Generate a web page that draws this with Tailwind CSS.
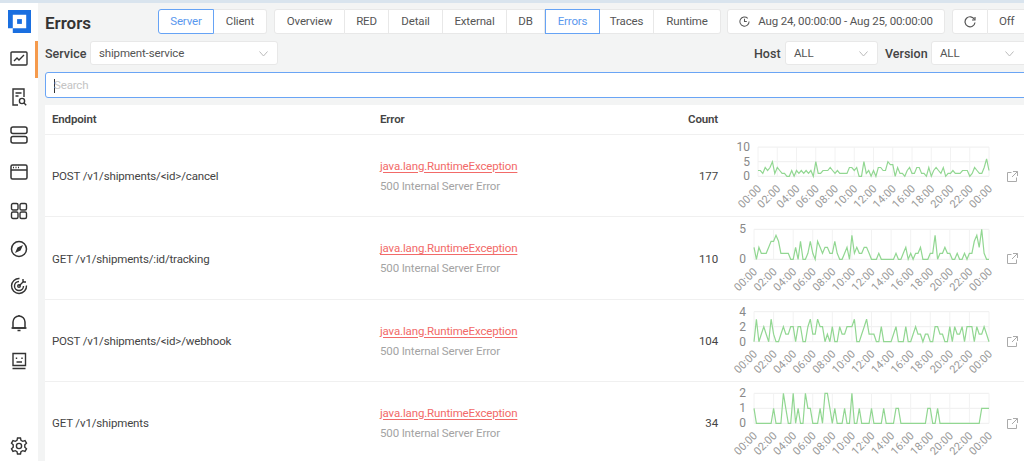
<!DOCTYPE html>
<html lang="en">
<head>
    <meta charset="UTF-8" />
    <title>Errors</title>
    <script src="https://cdn.jsdelivr.net/npm/@tailwindcss/browser@4"></script>
</head>
<body class="h-[461px] overflow-hidden bg-[#f3f4f4] font-['Roboto',sans-serif] text-[#333]">
    <div class="h-[3px] bg-[#d9e4ee]"></div>
    <div class="flex h-[458px]">
        <!-- sidebar -->
        <aside class="relative flex w-[38px] shrink-0 flex-col items-center bg-white text-[#333]">
            <svg class="mt-[7px] h-[23px] w-[23px]" viewBox="0 0 24 24">
                <path fill="#1a6fe0" d="M0 0h24v24H5v-5H19V5H5v14H0z"/>
                <rect fill="#1a6fe0" x="9.500" y="9.500" width="5" height="5"/>
            </svg>
            <div class="absolute right-0 top-[38px] h-[37px] w-[3px] bg-[#f59a4c]"></div>
            <svg class="mt-[17px] h-[18px] w-[18px]" viewBox="0 0 18 18" fill="none" stroke="currentColor" stroke-width="1.4"><rect x="1" y="2" width="16" height="13" rx="1"/><path d="M4 11l3-3 2 2 5-5"/></svg>
            <svg class="mt-[20px] h-[18px] w-[18px]" viewBox="0 0 18 18" fill="none" stroke="currentColor" stroke-width="1.4"><path d="M8 17H3V1h11v8"/><path d="M5.500 5h6M5.500 8h3"/><circle cx="12" cy="13" r="2.600"/><path d="M14 15l2.200 2.200"/></svg>
            <svg class="mt-[20px] h-[18px] w-[18px]" viewBox="0 0 18 18" fill="none" stroke="currentColor" stroke-width="1.5"><rect x="1" y="1" width="16" height="6.500" rx="2"/><rect x="1" y="10.500" width="16" height="6.500" rx="2"/></svg>
            <svg class="mt-[19px] h-[18px] w-[18px]" viewBox="0 0 18 18" fill="none" stroke="currentColor" stroke-width="1.5"><rect x="1" y="2" width="16" height="14" rx="1.500"/><path d="M1 7h16M3 4.600h1M5.500 4.600h1M8 4.600h1"/></svg>
            <svg class="mt-[21px] h-[18px] w-[18px]" viewBox="0 0 18 18" fill="none" stroke="currentColor" stroke-width="1.4"><rect x="1.500" y="1.500" width="6.500" height="6.500" rx="1.500"/><rect x="10" y="1.500" width="6.500" height="6.500" rx="1.500"/><rect x="1.500" y="10" width="6.500" height="6.500" rx="1.500"/><rect x="10" y="10" width="6.500" height="6.500" rx="1.500"/></svg>
            <svg class="mt-[20px] h-[18px] w-[18px]" viewBox="0 0 18 18" fill="none" stroke="currentColor" stroke-width="1.5"><circle cx="9" cy="9" r="7.500"/><path fill="currentColor" stroke="none" d="M13 5l-2.500 5.500L5 13l2.500-5.500z"/></svg>
            <svg class="mt-[19px] h-[18px] w-[18px]" viewBox="0 0 18 18" fill="none" stroke="currentColor" stroke-width="1.4"><path d="M16.500 8.500a7.500 7.500 0 1 1-7-7"/><path d="M13.500 9a4.500 4.500 0 1 1-4.500-4.500"/><circle cx="9" cy="9" r="1.300"/><path d="M9 9l5-5M13 2v3h3"/></svg>
            <svg class="mt-[19px] h-[18px] w-[18px]" viewBox="0 0 18 18" fill="none" stroke="currentColor" stroke-width="1.5"><path d="M3 14V8a6 6 0 0 1 12 0v6z"/><path d="M1.500 14h15M7.500 16.500h3M9 1v1"/></svg>
            <svg class="mt-[20px] h-[18px] w-[18px]" viewBox="0 0 18 18" fill="none" stroke="currentColor" stroke-width="1.4"><path d="M3 1.500h12.500v12H3zM2.500 16.500h13"/><path d="M6.500 5.500v1.500M12 5.500v1.500M6.500 10h5.500"/></svg>
            <svg class="mt-auto mb-[6px] h-[18px] w-[18px]" viewBox="0 0 18 18" fill="none" stroke="currentColor" stroke-width="1.4"><circle cx="9" cy="9" r="2.600"/><path d="M7.500 1h3l.5 2.300 1.700 1 2.300-.7 1.500 2.600-1.700 1.600v2.400l1.700 1.600-1.500 2.600-2.300-.7-1.700 1-.5 2.300h-3l-.5-2.300-1.700-1-2.300.7-1.500-2.600 1.700-1.600V7.800L1.500 6.200 3 3.600l2.300.7 1.700-1z"/></svg>
        </aside>

        <main class="min-w-0 flex-1 pl-[7px] text-[11.5px] tracking-[-0.15px]">
            <!-- top bar -->
            <div class="flex h-[38px] items-start whitespace-nowrap pt-[6px] text-[#555] *:shrink-0">
                <h1 class="w-[113px] text-[17px] font-semibold leading-[28px] tracking-normal text-[#333]">Errors</h1>
                <div class="flex h-[25px] items-center justify-center w-[56px] rounded-l-[3px] border border-[#66a3f5] bg-white text-[#5a98ee]">Server</div>
                <div class="flex h-[25px] items-center justify-center w-[53px] rounded-r-[3px] border border-l-0 border-[#e8e8e8] bg-white">Client</div>
                <div class="ml-[7px] flex h-[25px] items-center justify-center w-[71px] rounded-l-[3px] border border-[#e8e8e8] bg-white">Overview</div>
                <div class="flex h-[25px] items-center justify-center w-[44px] border border-l-0 border-[#e8e8e8] bg-white">RED</div>
                <div class="flex h-[25px] items-center justify-center w-[54px] border border-l-0 border-[#e8e8e8] bg-white">Detail</div>
                <div class="flex h-[25px] items-center justify-center w-[64px] border border-l-0 border-[#e8e8e8] bg-white">External</div>
                <div class="flex h-[25px] items-center justify-center w-[38px] border border-l-0 border-[#e8e8e8] bg-white">DB</div>
                <div class="flex h-[25px] items-center justify-center w-[55px] border border-[#66a3f5] bg-white text-[#5a98ee]">Errors</div>
                <div class="flex h-[25px] items-center justify-center w-[54px] border border-l-0 border-[#e8e8e8] bg-white">Traces</div>
                <div class="flex h-[25px] items-center justify-center w-[67px] rounded-r-[3px] border border-l-0 border-[#e8e8e8] bg-white">Runtime</div>
                <div class="ml-[6px] flex h-[25px] w-[218px] items-center justify-center gap-[8px] rounded-[3px] border border-[#e8e8e8] bg-white">
                    <svg class="h-[11px] w-[11px]" viewBox="0 0 12 12" fill="none" stroke="#555" stroke-width="1.100"><path d="M11 6a5 5 0 1 1-1.500-3.500"/><path d="M6 3v3h2.500"/></svg>
                    <span>Aug 24, 00:00:00 - Aug 25, 00:00:00</span>
                </div>
                <div class="ml-[7px] flex h-[25px] w-[36px] items-center justify-center rounded-l-[3px] border border-[#e8e8e8] bg-white">
                    <svg class="h-[12px] w-[12px]" viewBox="0 0 12 12" fill="none" stroke="#555" stroke-width="1.200"><path d="M10.500 3.500A5 5 0 1 0 11 6.500"/><path d="M11 1v3H8"/></svg>
                </div>
                <div class="flex h-[25px] w-[43px] items-center justify-start pl-[11px] border border-l-0 border-[#e8e8e8] bg-white">Off</div>
            </div>

            <!-- filters -->
            <div class="flex h-[31px] items-start whitespace-nowrap">
                <span class="w-[45px] text-[12.5px] font-medium leading-[26px] tracking-normal text-[#444]">Service</span>
                <div class="flex h-[24px] w-[188px] items-center justify-between rounded-[3px] border border-[#e8e8e8] bg-white pl-[8px] pr-[9px] pt-px text-[#555]">
                    <span>shipment-service</span>
                    <svg class="h-[6px] w-[9px]" viewBox="0 0 9 6" fill="none" stroke="#bbb"><path d="M.5.500l4 4.500 4-4.500"/></svg>
                </div>
                <span class="ml-auto w-[31px] text-[12.5px] font-medium leading-[26px] tracking-normal text-[#444]">Host</span>
                <div class="flex h-[24px] w-[93px] items-center justify-between rounded-[3px] border border-[#e8e8e8] bg-white pl-[8px] pr-[9px] pt-px text-[#555]">
                    <span>ALL</span>
                    <svg class="h-[6px] w-[9px]" viewBox="0 0 9 6" fill="none" stroke="#bbb"><path d="M.5.500l4 4.500 4-4.500"/></svg>
                </div>
                <span class="ml-[7px] w-[46px] text-[12.5px] font-medium leading-[26px] tracking-normal text-[#444]">Version</span>
                <div class="-mr-[7px] flex h-[24px] w-[100px] items-center justify-between rounded-[3px] border border-[#e8e8e8] bg-white pl-[8px] pr-[16px] pt-px text-[#555]">
                    <span>ALL</span>
                    <svg class="h-[6px] w-[9px]" viewBox="0 0 9 6" fill="none" stroke="#bbb"><path d="M.5.500l4 4.500 4-4.500"/></svg>
                </div>
            </div>

            <!-- search -->
            <div class="-mr-[3px] flex h-[26px] items-center rounded-[3px] border border-[#6aa5f5] bg-white pl-[8px] pt-px text-[#c4c4c4]">
                <span class="mr-[-1px] h-[14px] w-px bg-[#333]"></span><span>Search</span>
            </div>

            <!-- table -->
            <div class="mt-[7px] bg-white text-[#444]">
                <div class="grid h-[30px] grid-cols-[328px_300px_52px_1fr] items-center border-b border-[#f0f0f0] font-semibold">
                    <div class="pl-[7px]">Endpoint</div>
                    <div class="pl-[7px]">Error</div>
                    <div class="pr-[7px] text-right">Count</div>
                    <div></div>
                </div>
                <div id="rows"></div>
            </div>
        </main>
    </div>

    <script>
        const rows = [
            {
                endpoint: "POST /v1/shipments/<id>/cancel", count: 177, h: 82, x0: 33, y0: 41.3, step: 14.6, ticks: [0, 5, 10],
                data: [2,2,1,3,2,3,5,1,3,2,1,1,0,0,2,0,2,1,2,1,2,1,2,0,5,1,1,2,2,2,3,2,1,2,1,1,1,1,3,3,2,3,0,0,5,1,2,0,2,0,3,3,2,2,5,4,4,0,3,1,1,0,2,3,1,1,3,3,1,1,0,3,0,2,3,2,1,3,0,1,1,2,1,1,1,2,2,2,0,1,3,2,1,1,3,6,2]
            },
            {
                endpoint: "GET /v1/shipments/:id/tracking", count: 110, h: 83, x0: 29, y0: 42.3, step: 30, ticks: [0, 5],
                data: [2,0,2,1,1,1,2,3,3,4,3,1,1,1,1,0,0,2,0,3,0,0,1,3,1,0,3,2,1,2,2,1,1,3,1,0,0,1,2,0,4,1,2,1,1,2,2,1,0,0,0,1,0,0,0,0,0,0,1,0,0,1,2,0,1,0,1,1,2,0,0,0,1,1,4,0,1,1,2,1,1,0,0,1,0,0,1,0,1,1,3,4,2,5,1,0,0]
            },
            {
                endpoint: "POST /v1/shipments/<id>/webhook", count: 104, h: 82, x0: 29, y0: 41.7, step: 15, ticks: [0, 2, 4],
                data: [0,3,0,1,2,1,0,3,1,0,0,1,2,1,1,2,2,0,2,2,0,0,2,3,1,1,3,2,2,0,1,0,2,0,0,2,1,1,2,2,2,3,0,0,1,2,3,1,1,1,0,0,2,0,0,0,0,1,2,0,0,0,2,0,0,1,2,1,1,0,1,1,0,0,2,2,1,1,0,0,2,0,2,1,1,2,0,2,2,2,0,2,1,1,2,1,0]
            },
            {
                endpoint: "GET /v1/shipments", count: 34, h: 82, x0: 29, y0: 41.3, step: 15, ticks: [0, 1, 2],
                data: [1,0,0,0,0,0,0,0,1,0,0,0,2,1,0,0,2,0,1,0,0,2,1,1,0,0,0,1,0,2,2,1,0,1,0,0,0,1,0,0,2,0,0,1,0,0,0,0,1,0,0,0,0,1,0,0,0,0,1,1,0,0,0,0,0,0,0,0,0,0,0,1,1,0,0,1,0,0,0,0,0,0,0,0,0,0,0,0,0,0,0,0,0,1,1,1,1]
            }
        ];

        const labels = ["00:00","02:00","04:00","06:00","08:00","10:00","12:00","14:00","16:00","18:00","20:00","22:00","00:00"];

        function chartSvg(r) {
            const x1 = 264;
            const dx = (x1 - r.x0) / 96;
            const pts = r.data.map((v, i) => (r.x0 + i * dx).toFixed(1) + "," + (r.y0 - v * r.step / r.ticks[1]).toFixed(1)).join(" ");
            let out = "";
            r.ticks.forEach(t => {
                const y = r.y0 - t * r.step / r.ticks[1];
                out += `<line x1="${r.x0}" x2="${x1}" y1="${y}" y2="${y}" stroke="#eee"/>`;
                out += `<text x="${r.x0 - 8}" y="${y + 4}" text-anchor="end" font-size="12" letter-spacing="0" fill="#888">${t}</text>`;
            });
            const yTop = r.y0 - r.ticks[r.ticks.length - 1] * r.step / r.ticks[1];
            labels.forEach((l, i) => {
                const x = r.x0 + i * 8 * dx;
                out += `<line x1="${x}" x2="${x}" y1="${yTop}" y2="${r.y0}" stroke="#f2f2f2"/>`;
                out += `<text transform="translate(${x + 4} ${r.y0 + 13}) rotate(-45)" text-anchor="end" font-size="11" letter-spacing="0" fill="#999">${l}</text>`;
            });
            out += `<polyline points="${pts}" fill="none" stroke="#92d792" stroke-width="1.2"/>`;
            return `<svg width="299" height="${r.h - 1}" viewBox="0 0 299 ${r.h - 1}">${out}</svg>`;
        }

        function esc(s) {
            return s.replace(/</g, "&lt;").replace(/>/g, "&gt;");
        }

        document.getElementById("rows").innerHTML = rows.map(r => `
            <div class="relative grid grid-cols-[328px_300px_52px_1fr] items-center border-b border-[#f0f0f0]" style="height:${r.h}px">
                <div class="mt-[3px] pl-[7px]">${esc(r.endpoint)}</div>
                <div class="pl-[7px]">
                    <div class="text-[#f26a68] underline underline-offset-2 leading-[18px]">java.lang.RuntimeException</div>
                    <div class="mt-[2px] text-[#a3a3a3] leading-[18px]">500 Internal Server Error</div>
                </div>
                <div class="mt-[3px] pr-[7px] text-right">${r.count}</div>
                <div class="flex items-center">
                    ${chartSvg(r)}
                </div>
                <svg class="absolute left-[962px] top-[36px] h-[11px] w-[11px]" viewBox="0 0 11 11" fill="none" stroke="#aaa"><path d="M9.500 6.500v4h-9v-9h4M6 .500h4.500V5M10.500.500L5 6"/></svg>
            </div>`).join("");
    </script>
</body>
</html>
